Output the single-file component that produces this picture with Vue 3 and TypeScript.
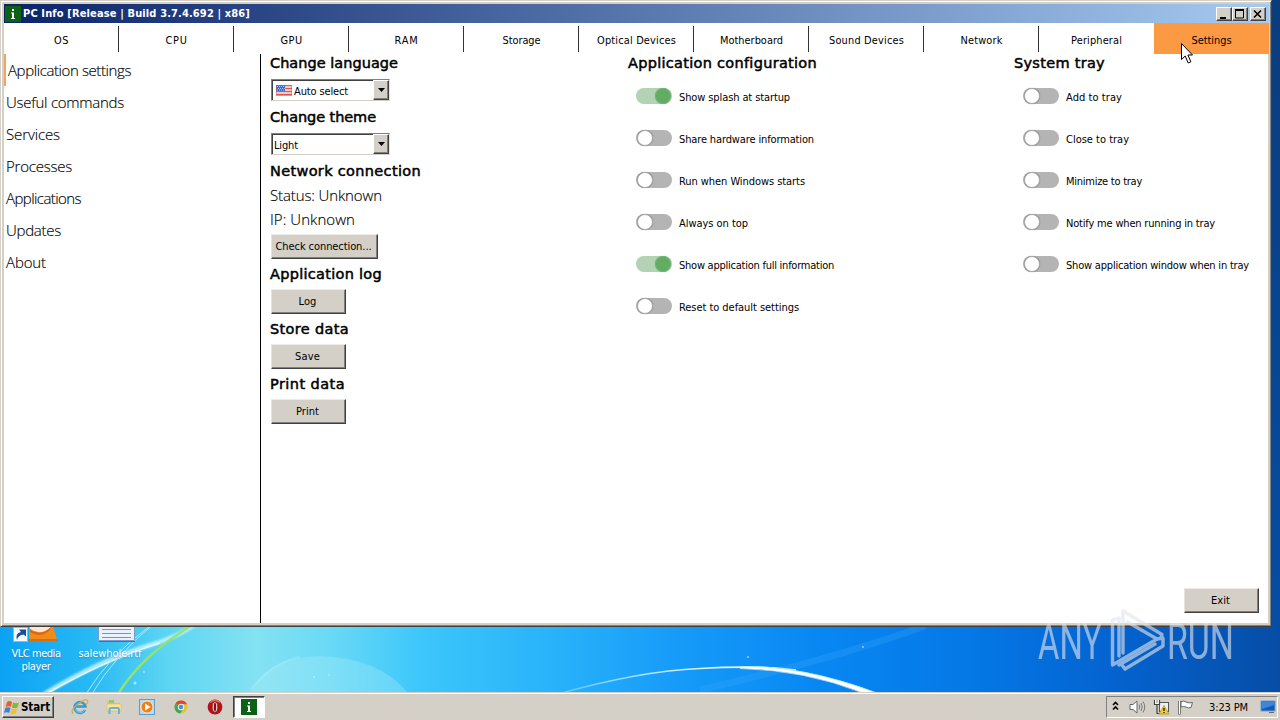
<script setup lang="ts">
import { ref } from 'vue'

interface Label { text: string; w: number }
interface Option extends Label { on?: boolean }

// Tracks a label out or in so that it spans the given number of pixels.
const vFit = {
  mounted(el: HTMLElement, binding: { value: number }) {
    const n = (el.textContent || '').length
    const natural = el.getBoundingClientRect().width
    el.style.letterSpacing = `${(binding.value - natural) / n}px`
  },
}

const tabs: Label[] = [
  { text: 'OS', w: 15 }, { text: 'CPU', w: 22 }, { text: 'GPU', w: 22 }, { text: 'RAM', w: 24 },
  { text: 'Storage', w: 38 }, { text: 'Optical Devices', w: 79 }, { text: 'Motherboard', w: 63 },
  { text: 'Sound Devices', w: 75 }, { text: 'Network', w: 42 }, { text: 'Peripheral', w: 51 },
  { text: 'Settings', w: 40 },
]
const activeTab = ref(10)
const nav: Label[] = [
  { text: 'Application settings', w: 123 }, { text: 'Useful commands', w: 118 },
  { text: 'Services', w: 54 }, { text: 'Processes', w: 66 }, { text: 'Applications', w: 75 },
  { text: 'Updates', w: 55 }, { text: 'About', w: 40 },
]
const activeNav = ref(0)
const config = ref<Option[]>([
  { text: 'Show splash at startup', w: 111, on: true },
  { text: 'Share hardware information', w: 135 },
  { text: 'Run when Windows starts', w: 126 },
  { text: 'Always on top', w: 69 },
  { text: 'Show application full information', w: 155, on: true },
  { text: 'Reset to default settings', w: 120 },
])
const tray = ref<Option[]>([
  { text: 'Add to tray', w: 56 },
  { text: 'Close to tray', w: 63 },
  { text: 'Minimize to tray', w: 76 },
  { text: 'Notify me when running in tray', w: 149 },
  { text: 'Show application window when in tray', w: 183 },
])
const actions = [
  { title: 'Application log', w: 112, button: 'Log', bw: 18 },
  { title: 'Store data', w: 79, button: 'Save', bw: 25 },
  { title: 'Print data', w: 75, button: 'Print', bw: 23 },
]
</script>

<template>
  <div class="desktop">
    <svg class="wallpaper" width="1280" height="720" viewBox="0 0 1280 720">
      <defs>
        <linearGradient id="sky" x1="0" x2="1" y1="0" y2="0">
          <stop offset="0" stop-color="#0ba2f4" />
          <stop offset=".07" stop-color="#27b9f4" />
          <stop offset=".13" stop-color="#5bd5f2" />
          <stop offset=".2" stop-color="#84e2f2" />
          <stop offset=".26" stop-color="#68d9f6" />
          <stop offset=".33" stop-color="#3cc6fa" />
          <stop offset=".43" stop-color="#29b3fa" />
          <stop offset=".53" stop-color="#169bf9" />
          <stop offset=".64" stop-color="#0887f2" />
          <stop offset=".76" stop-color="#0478e6" />
          <stop offset=".87" stop-color="#0463d0" />
          <stop offset="1" stop-color="#064da6" />
        </linearGradient>
        <linearGradient id="edge" x1="0" x2="0" y1="0" y2="1">
          <stop offset="0" stop-color="#0b3c7c" />
          <stop offset="1" stop-color="#064da4" />
        </linearGradient>
        <linearGradient id="arc" x1="0" x2="1" y1="0" y2="0">
          <stop offset="0" stop-color="#5cc4ff" />
          <stop offset=".5" stop-color="#c4eeff" />
          <stop offset="1" stop-color="#fff" />
        </linearGradient>
        <filter id="soft" x="-10%" y="-40%" width="120%" height="180%"><feGaussianBlur stdDeviation="1.1" /></filter>
      </defs>
      <rect y="620" width="1280" height="80" fill="url(#sky)" />
      <rect x="1268" width="12" height="626" fill="url(#edge)" />
      <path d="M250 693Q265 657 320 656Q380 658 408 693Z" fill="#b2f0fa" opacity=".3" />
      <path d="M250 690Q275 661 300 657" stroke="#b9f2fb" stroke-width="2" opacity=".3" fill="none" />
      <g fill="none" filter="url(#soft)">
        <path d="M44 694Q100 660 150 645Q180 636 195 624" stroke="#d8f8ff" stroke-width="4" opacity=".8" />
      </g>
      <g fill="none">
        <path d="M46 694Q105 660 160 643" stroke="#ddf9ff" stroke-width="1.6" />
        <path d="M86 694Q110 655 150 626M92 694Q114 656 156 622" stroke="#a5eafb" stroke-width="1" />
        <path d="M118 694Q142 655 194 624" stroke="#96e36c" stroke-width="2.4" />
        <path d="M558 694Q640 671 700 668.5Q755 665 796 670" stroke="url(#arc)" stroke-width="1.7" />
        <path d="M700 690Q830 660 925 626" stroke="#35a4fb" stroke-width="7" opacity=".3" />
      </g>
      <path d="M740 666.500Q802 665 877 693L863 693Q805 670 740 668.500Z" fill="#fff" stroke="#b5e4ff" stroke-width=".8" />
      <g fill="#b8f3ff" opacity=".8">
        <circle cx="135" cy="683" r="1.5" /><circle cx="144" cy="672" r=".9" /><circle cx="314" cy="677" r="1" />
        <circle cx="329" cy="675" r=".8" /><circle cx="748" cy="657" r=".9" /><circle cx="863" cy="647" r=".9" />
      </g>
      <!-- VLC cone base with shortcut badge -->
      <path d="M29 620H51L57 639Q57 641 54 641H29Z" fill="#f08a19" />
      <path d="M30 625H50V628Q40 636 30 629Z" fill="#ffe7d6" />
      <path d="M30 629Q40 637 50 628V630Q40 639 30 632Z" fill="#d9641a" />
      <path d="M28 640H57" stroke="#c65d0a" stroke-width="1.2" />
      <rect x="13.5" y="627.5" width="14" height="14" fill="#f4f7fb" stroke="#9fb6cc" />
      <path d="M17 640Q15 633 21 632L19 629.500H26V636.500L23.500 634.500Q18 635 17 640Z" fill="#164e9c" />
      <!-- text document -->
      <path d="M98.500 620H134.500V640.500H98.500Z" fill="#eaf3fc" stroke="#7b9cca" />
      <path d="M102 629.500H131M102 633.500H131M102 637.500H131" stroke="#7594c4" />
      <path d="M99 641.500H135" stroke="#44719f" />
    </svg>
    <span class="icon-label vlc"><span v-fit="49">VLC media</span><br><span v-fit="29">player</span></span>
    <span class="icon-label doc"><span v-fit="63">salewhole.rtf</span></span>

    <main class="window">
      <header class="titlebar">
        <svg class="app-icon" width="16" height="16" viewBox="0 0 16 16">
          <rect width="16" height="16" fill="#0c6112" />
          <path d="M7 3h2v2H7zM6 6.500h3V12h1v1H6v-1h1V7.500H6z" fill="#fff" />
        </svg>
        <span v-fit="227" class="title">PC Info [Release | Build 3.7.4.692 | x86]</span>
        <div class="captions">
          <button><svg width="14" height="12"><path d="M3 9h6v2H3z" /></svg></button>
          <button><svg width="14" height="12"><path d="M2.500 2h8v8h-8z" fill="none" stroke="#000" /><path d="M2 1h9v2H2z" /></svg></button>
          <button class="close"><svg width="14" height="12"><path d="M3 2.500l7 7M10 2.500l-7 7" stroke="#000" stroke-width="1.6" /></svg></button>
        </div>
      </header>

      <nav class="tabs">
        <button v-for="(t, i) in tabs" :key="t.text" class="tab" :class="{ active: i === activeTab, before: i === activeTab - 1 }" @click="activeTab = i">
          <span v-fit="t.w">{{ t.text }}</span>
        </button>
      </nav>

      <section class="body">
        <aside class="sidebar">
          <div v-for="(n, i) in nav" :key="n.text" class="nav-item" :class="{ active: i === activeNav }" @click="activeNav = i">
            <span v-fit="n.w">{{ n.text }}</span>
          </div>
        </aside>

        <div class="col general">
          <h2><span v-fit="128">Change language</span></h2>
          <div class="select">
            <svg class="flag" width="16" height="11" viewBox="0 0 16 11">
              <rect width="16" height="11" fill="#fbeeee" />
              <path d="M0 .5h16M0 3.500h16M0 6.500h16M0 9.500h16" stroke="#e0574f" stroke-width="1.3" />
              <rect width="9" height="6" fill="#3c6fc4" />
              <path d="M1 1.500h7M2 3.500h7M1 5h7" stroke="#c3dcfa" stroke-width=".8" stroke-dasharray="1 1" />
              <rect x=".5" y=".5" width="15" height="10" fill="none" stroke="#b36a78" opacity=".5" />
            </svg>
            <span v-fit="54" class="value">Auto select</span>
            <i class="arrow"><svg width="7" height="4"><path d="M0 0h7L3.500 4z" /></svg></i>
          </div>
          <h2><span v-fit="106">Change theme</span></h2>
          <div class="select">
            <span v-fit="24" class="value plain">Light</span>
            <i class="arrow"><svg width="7" height="4"><path d="M0 0h7L3.500 4z" /></svg></i>
          </div>
          <h2 class="tight"><span v-fit="151">Network connection</span></h2>
          <p><span v-fit="112">Status: Unknown</span></p>
          <p><span v-fit="85">IP: Unknown</span></p>
          <button class="btn wide"><span v-fit="96">Check connection...</span></button>
          <template v-for="a in actions" :key="a.title">
            <h2 class="action"><span v-fit="a.w">{{ a.title }}</span></h2>
            <button class="btn"><span v-fit="a.bw">{{ a.button }}</span></button>
          </template>
        </div>

        <div class="col config">
          <h2><span v-fit="189">Application configuration</span></h2>
          <label v-for="o in config" :key="o.text" class="option" @click="o.on = !o.on">
            <i class="toggle" :class="{ on: o.on }"></i><span v-fit="o.w">{{ o.text }}</span>
          </label>
        </div>

        <div class="col tray">
          <h2><span v-fit="91">System tray</span></h2>
          <label v-for="o in tray" :key="o.text" class="option" @click="o.on = !o.on">
            <i class="toggle" :class="{ on: o.on }"></i><span v-fit="o.w">{{ o.text }}</span>
          </label>
          <button class="btn exit"><span v-fit="19">Exit</span></button>
        </div>
      </section>
    </main>

    <footer class="taskbar">
      <button class="start">
        <svg width="16" height="15" viewBox="0 0 16 15">
          <path d="M3 2Q5.500 0 8 2L6.800 7Q4.500 5.500 1.600 7Z" fill="#e5602d" />
          <path d="M9 2.500Q12 4 15 2.500L13.500 7.500Q11 9 7.800 7.500Z" fill="#83b93b" />
          <path d="M1.300 8Q4 6.500 6.500 8L5.200 13Q3 11.500 0 13Z" fill="#3b84cf" />
          <path d="M7.500 8.500Q10.500 10 13.200 8.500L12 13.500Q9 15 6.200 13.500Z" fill="#f5c02e" />
        </svg>
        <span v-fit="29">Start</span>
      </button>
      <div class="pinned">
        <svg width="18" height="18" viewBox="0 0 18 18">
          <path d="M14 12A5.500 5.500 0 1 1 14.500 8.500H5" fill="none" stroke="#2e9ddc" stroke-width="2.600" />
          <path d="M13.500 12.500A5.500 5.500 0 0 1 4 11" fill="none" stroke="#70c9f1" stroke-width="1" />
          <path d="M2 15.500Q-1 12 7 6Q15 0 16.500 2.500Q17.500 4 15 7" fill="none" stroke="#dba93c" stroke-width="1.200" />
        </svg>
        <svg width="18" height="18" viewBox="0 0 18 18">
          <path d="M2 3h5l1 2h7v7H2z" fill="#e7c65d" /><path d="M4 2h5v3H4z" fill="#92c67b" />
          <path d="M2 6h14v7H2z" fill="#f9e59a" stroke="#dbb650" stroke-width=".6" />
          <path d="M4.500 16v-4.500q0-1.500 1.500-1.500h6.500q1.500 0 1.500 1.500V16" fill="none" stroke="#63b2df" stroke-width="2" />
        </svg>
        <svg width="18" height="18" viewBox="0 0 18 18">
          <rect x="1.500" y="1.500" width="15" height="15" fill="#b7d9f3" stroke="#5b9ed0" />
          <circle cx="9" cy="9" r="6" fill="#ef8017" stroke="#fff1cf" stroke-width=".8" /><path d="M7 5.500v7L12.500 9z" fill="#fff" />
        </svg>
        <svg width="18" height="18" viewBox="0 0 18 18">
          <circle cx="9" cy="9" r="6.500" fill="#e8c22d" />
          <path d="M9 9L3.400 5.700A6.500 6.500 0 0 1 15 6.300H9z" fill="#dc4638" />
          <path d="M9 9L3.400 5.700A6.500 6.500 0 0 0 8.300 15.500L11 11z" fill="#3fa758" />
          <circle cx="9" cy="9" r="3.200" fill="#f5f5f5" /><circle cx="9" cy="9" r="2.300" fill="#458fe0" />
        </svg>
        <svg width="18" height="18" viewBox="0 0 18 18">
          <circle cx="9" cy="9" r="7.400" fill="#b51218" /><path d="M4 4.500A7 7 0 0 1 14 4.500" fill="none" stroke="#e36c66" stroke-width="1.500" />
          <ellipse cx="9" cy="9" rx="2.800" ry="5.200" fill="#eadfda" stroke="#7b080d" stroke-width=".6" /><ellipse cx="9" cy="9" rx="1.200" ry="4.200" fill="#8d0b10" />
        </svg>
      </div>
      <div class="task">
        <svg width="16" height="16" viewBox="0 0 16 16">
          <rect width="16" height="16" fill="#0c6112" />
          <path d="M7 3h2v2H7zM6 6.500h3V12h1v1H6v-1h1V7.500H6z" fill="#fff" />
        </svg>
      </div>
      <div class="systray">
        <svg class="chev" width="7" height="10" viewBox="0 0 7 10"><path d="M1 4l2.500-2.500L6 4M1 8.500L3.500 6 6 8.500" fill="none" stroke="#000" stroke-width="1.600" /></svg>
        <svg class="vol" width="17" height="14" viewBox="0 0 17 14">
          <path d="M1 4.500h3L8 1v12L4 9.500H1z" fill="#fff" stroke="#666" />
          <path d="M10 4.500q1.500 2.500 0 5M12 3q2.500 4 0 8M14 1.500q3.500 5.500 0 11" fill="none" stroke="#777" />
        </svg>
        <svg class="net" width="17" height="16" viewBox="0 0 17 16">
          <rect x="6.500" y="3.500" width="9" height="9" fill="#eee" stroke="#555" />
          <path d="M1.500 1v4.500h5V1M4 5.500v9h4" fill="none" stroke="#444" stroke-width="1.200" /><path d="M2.200 1h3.600v3.800H2.200z" fill="#fff" />
          <path d="M4 1v3" stroke="#555" stroke-width=".8" />
          <path d="M11 6.500L16 15H6z" fill="#f5d21d" stroke="#a68a12" stroke-width=".7" /><path d="M11 9v3M11 13v1" stroke="#000" stroke-width="1.200" />
        </svg>
        <svg class="action" width="17" height="15" viewBox="0 0 17 15">
          <path d="M2.500 1v13.500" stroke="#555" stroke-width="2.400" /><path d="M2.500 1v13" stroke="#fff" />
          <path d="M4 1.500q3-1 5 .5 3 1.500 6.500.5l-1.500 5q-2.500 1-5-.5-2.500-1-5 0z" fill="#fff" stroke="#666" />
        </svg>
        <span v-fit="39" class="clock">3:23 PM</span>
        <svg class="show" width="16" height="14" viewBox="0 0 16 14">
          <rect x="1" y="1" width="14" height="10" fill="#1559b4" stroke="#6e9ed2" /><path d="M2 2h12v3L2 9z" fill="#3e86d9" />
          <path d="M9 12.500h5" stroke="#667" />
        </svg>
      </div>
    </footer>

    <svg class="watermark" width="230" height="84" viewBox="0 0 230 84">
      <g fill="#dfe4ea" opacity=".62">
        <text x="3" y="54" textLength="64" lengthAdjust="spacingAndGlyphs">ANY</text>
        <text x="132" y="54" textLength="67" lengthAdjust="spacingAndGlyphs">RUN</text>
      </g>
      <g fill="none" stroke="#dfe5ec" stroke-width="3.400" stroke-linejoin="round" stroke-linecap="round" opacity=".62">
        <path d="M84 13L77.500 15V60L122 34L92.500 17" />
        <path d="M84 14V51M88 48V6L127 29.500L126 33" />
        <path d="M84 60L120 39M90 64L128 41V33L122 34M90 64L87 60" />
      </g>
    </svg>

    <svg class="cursor" width="14" height="23" viewBox="0 0 14 23">
      <path d="M1.500 1.500v16l3.700-3.500 3 7 2.700-1.200-3-6.800H12.500z" fill="#fff" stroke="#000" stroke-width="1" />
    </svg>
  </div>
</template>

<style>
html, body { margin: 0; overflow: hidden; }
</style>

<style scoped>
*, *::after { box-sizing: border-box; }
.desktop {
  position: relative; width: 1280px; height: 720px; overflow: hidden;
  display: flex; flex-direction: column; justify-content: space-between;
  font: 11px "DejaVu Sans Condensed", "DejaVu Sans", "Noto Sans", sans-serif;
  font-stretch: condensed; color: #000; white-space: nowrap; cursor: default;
}
svg { display: block; flex: none; }
button { font: inherit; color: inherit; padding: 0; margin: 0; border: 0; background: none; }
.wallpaper { position: absolute; left: 0; top: 0; }
.icon-label { position: absolute; top: 647px; color: #fff; text-align: center; line-height: 13px; text-shadow: 0 1px 2px #1b6b9c88; }
.vlc { left: 6px; width: 60px; }
.doc { left: 73px; width: 74px; }

.window {
  position: relative; width: 1272px; height: 627px; background: #fff;
  border: 1px solid; border-color: #d4d0c8 #404040 #404040 #d4d0c8;
  box-shadow: inset 1px 1px #fff, inset -1px -1px #808080, inset 0 0 0 3px #d4d0c8;
  padding: 3px 2px 3px 3px; display: flex; flex-direction: column;
}
.titlebar {
  height: 19px; flex: none; display: flex; align-items: center; padding: 0 3px 0 1px;
  background: linear-gradient(90deg, #0a246a, #a6caf0);
}
.app-icon { margin-right: 2px; }
.title { color: #fff; font-weight: bold; font-size: 11px; }
.captions { margin-left: auto; display: flex; }
.captions button, .arrow {
  background: #d4d0c8; border: 1px solid; border-color: #fff #404040 #404040 #fff;
  box-shadow: inset -1px -1px #808080;
}
.captions button { width: 16px; height: 14px; }
.captions .close { margin-left: 2px; }

.tabs { display: flex; height: 31px; flex: none; }
.tab {
  width: 115px; flex: none; position: relative; text-align: center; padding-top: 3px;
  font-family: "DejaVu Sans", sans-serif; font-stretch: normal; font-size: 9.800px;
}
.tab:not(.active)::after {
  content: ""; position: absolute; right: 0; top: 3px; width: 1.500px; height: 26px; background: #333;
}
.tab.before::after { display: none; }
.tab.active { background: #fb9a43; width: 115px; }

.body { display: flex; flex: 1; min-height: 0; }
.sidebar { width: 257px; border-right: 1px solid #000; }
.nav-item, p { font-family: "Open Sans", "Noto Sans", sans-serif; font-stretch: normal; font-size: 15px; font-weight: 300; -webkit-text-stroke: .15px #000; }
.nav-item { height: 32px; line-height: 33px; padding-left: 2px; }
.nav-item.active { border-left: 2px solid #f5a35c; }
.col { display: flex; flex-direction: column; align-items: flex-start; }
.general { width: 366px; padding-left: 9px; }
.config { width: 387px; padding-left: 1px; }
.tray { flex: 1; position: relative; }
h2 {
  margin: 0 0 7px; font-family: "DejaVu Sans", sans-serif; font-stretch: normal; font-size: 14.500px;
  line-height: 19px; height: 18px; font-weight: 400; -webkit-text-stroke: .5px #000;
}
h2.tight { margin-bottom: 3px; }
h2.action { margin: 6px 0; }
p { margin: 0; line-height: 24px; height: 24px; }
.select {
  width: 119px; height: 22px; margin: 0 0 7px 1px; display: flex; align-items: center; padding-left: 4px;
  border: 1px solid; border-color: #808080 #e8e5df #d4d0c8 #808080; box-shadow: inset 1px 1px #404040;
}
.select .value { margin-left: 2px; padding-top: 2px; }
.select .value.plain { margin-left: -2px; }
.arrow { margin-left: auto; width: 16px; height: 20px; display: flex; align-items: center; justify-content: center; }
.btn {
  width: 75px; height: 25px; margin-left: 1px; padding-right: 2px; background: #d4d0c8; text-align: center;
  border: 1px solid; border-color: #eeece8 #404040 #404040 #e6e3dd; box-shadow: inset -1px -1px #808080;
}
.btn.wide { width: 107px; margin-top: 3px; }
.btn.exit { position: absolute; right: 10px; bottom: 10px; }
.config h2, .tray h2 { margin-bottom: 4px; }
.option { display: flex; align-items: center; height: 42px; padding-left: 9px; }
.config .option { padding-left: 8px; }
.toggle {
  position: relative; width: 36px; height: 16px; border-radius: 8px; background: #b4b4b4;
  margin: -2px 7px 0 0;
}
.toggle::after {
  content: ""; position: absolute; left: 1px; top: 0; width: 16px; height: 16px; border-radius: 50%;
  background: #fff; border: 1px solid #aaa; box-shadow: 0 0 1px #777;
}
.toggle.on { background: #b3d3b4; }
.toggle.on::after { left: 19px; background: #62ac64; border-color: #73b375; box-shadow: 0 0 1px #62ac64; }

.taskbar {
  position: relative; height: 28px; background: #d4d0c8; border-top: 1px solid #d4d0c8;
  box-shadow: inset 0 1px #fff; display: flex; align-items: center; padding: 1px 2px 0;
}
.start {
  width: 52px; height: 22px; display: flex; align-items: center; gap: 1px; padding-left: 1px;
  border: 1px solid; border-color: #fff #404040 #404040 #fff; box-shadow: inset -1px -1px #808080;
  font-weight: bold; font-size: 11.500px;
}
.pinned { display: flex; gap: 15.700px; margin-left: 17px; }
.task {
  width: 32px; height: 22px; margin-left: 9px; background: #fff; display: flex; align-items: center; justify-content: center;
  border: 1px solid; border-color: #404040 #fff #fff #404040; box-shadow: inset 1px 1px #808080;
}
.systray {
  margin-left: auto; width: 172px; height: 22px; display: flex; align-items: center;
  border: 1px solid; border-color: #808080 #fff #fff #808080; padding-left: 5px;
}
.chev { margin-top: -2px; }
.vol { margin-left: 10px; }
.net { margin-left: 7px; }
svg.action { margin-left: 7px; }
.clock { margin-left: 15px; }
.show { margin-left: 12px; }
.watermark { position: absolute; left: 1035px; top: 605px; }
.watermark text { font-family: Roboto, sans-serif; font-stretch: normal; font-weight: 400; font-size: 50px; }
.cursor { position: absolute; left: 1180px; top: 42px; }
</style>
